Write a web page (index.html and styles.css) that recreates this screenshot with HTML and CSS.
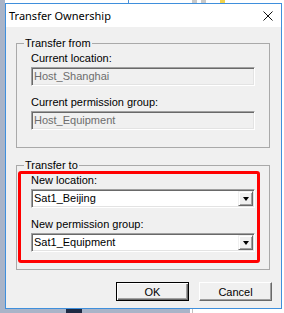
FILE: index.html
```html
<!DOCTYPE html>
<html lang="en">
<head>
  <meta charset="UTF-8">
  <title>Transfer Ownership</title>
  <link rel="stylesheet" href="styles.css">
</head>
<body>
  <div class="screen">
    <div class="desk-left"></div>
    <div class="desk-main">
      <div class="desk-top">
        <span class="desk-line"></span>
        <span class="desk-icon grey"></span>
        <span class="desk-icon grey"></span>
        <span class="desk-icon yellow"></span>
      </div>

      <div class="dialog">
        <div class="titlebar">
          <span class="title">Transfer Ownership</span>
          <svg class="close" width="10" height="10" viewBox="0 0 10 10">
            <path d="M0.5 0.5 L9.5 9.5 M9.5 0.5 L0.5 9.5" stroke="#111" stroke-width="1" fill="none"/>
          </svg>
        </div>

        <div class="client">
          <fieldset class="group">
            <legend>Transfer from</legend>
            <div class="group-body">
              <div class="label">Current location:</div>
              <div class="textbox disabled">Host_Shanghai</div>
              <div class="label gap">Current permission group:</div>
              <div class="textbox disabled">Host_Equipment</div>
            </div>
          </fieldset>

          <fieldset class="group second">
            <legend>Transfer to</legend>
            <div class="group-body">
              <div class="highlight"></div>
              <div class="label">New location:</div>
              <div class="textbox combo">
                <span>Sat1_Beijing</span>
                <span class="drop"><span class="arrow"></span></span>
              </div>
              <div class="label gap">New permission group:</div>
              <div class="textbox combo">
                <span>Sat1_Equipment</span>
                <span class="drop"><span class="arrow"></span></span>
              </div>
            </div>
          </fieldset>

          <div class="buttons">
            <div class="btn default">OK</div>
            <div class="btn">Cancel</div>
          </div>
        </div>
      </div>

      <div class="desk-bottom"><span class="task-block"></span></div>
    </div>
  </div>
</body>
</html>
```

FILE: styles.css
```css
body {
  margin: 0;
  background: #ffffff;
  font-family: 'Liberation Sans', Arial, sans-serif;
  font-size: 11px;
  color: #000;
}

.screen {
  display: flex;
  height: 313px;
  overflow: hidden;
}

.desk-left {
  width: 5px;
  background: #a9b4c8;
}

.desk-main {
  width: 279px;
}

/* strip of the window behind, above the dialog */
.desk-top {
  height: 3px;
  display: flex;
  align-items: stretch;
}

.desk-line {
  width: 1px;
  margin-left: 123px;
  background: #4a8fd8;
}

.desk-icon {
  width: 5px;
  margin-left: 4px;
}

.desk-icon:nth-child(2) {
  margin-left: 63px;
}

.desk-icon.grey {
  background: #c8c8c8;
}

.desk-icon.yellow {
  background: #f2d34a;
  margin-left: 14px;
}

.dialog {
  width: 277px;
  height: 306px;
  box-sizing: border-box;
  border: 1px solid #3f8fdc;
  display: flex;
  flex-direction: column;
}

.titlebar {
  height: 23px;
  background: #ffffff;
  display: flex;
  align-items: center;
  justify-content: space-between;
  padding: 0 8px 0 3px;
}

.title {
  font-family: 'Noto Sans', 'Open Sans', sans-serif;
  font-size: 11px;
  color: #000;
}

.close {
  display: block;
  margin-top: 1px;
}

.client {
  flex: 1;
  background: #f0f0f0;
  padding: 10px 9px 0 10px;
}

.group {
  margin: 0;
  padding: 0;
  width: 254px;
  box-sizing: border-box;
  border: 1px solid #a9a9a9;
  min-width: 0;
}

.group.second {
  margin-top: 11px;
}

.group legend {
  margin-left: 7px;
  padding: 0 1px;
  line-height: 13px;
}

.group-body {
  position: relative;
  padding: 2px 14px 17px 14px;
}

.label {
  line-height: 13px;
  margin-bottom: 2px;
}

.label.gap {
  margin-top: 10px;
}

.textbox {
  height: 19px;
  box-sizing: border-box;
  border-top: 1px solid #a0a0a0;
  border-left: 1px solid #a0a0a0;
  border-right: 1px solid #ffffff;
  border-bottom: 1px solid #ffffff;
  box-shadow: inset 1px 1px #696969, inset -1px -1px #e3e3e3;
  padding: 0 2px 0 2px;
  display: flex;
  align-items: center;
  line-height: 13px;
}

.textbox.disabled {
  background: #f0f0f0;
  color: #6d6d6d;
}

.textbox.combo {
  background: #ffffff;
  justify-content: space-between;
  padding-right: 1px;
}

.drop {
  width: 15px;
  height: 15px;
  box-sizing: border-box;
  background: #f0f0f0;
  border-top: 1px solid #f0f0f0;
  border-left: 1px solid #f0f0f0;
  border-right: 1px solid #696969;
  border-bottom: 1px solid #696969;
  box-shadow: inset 1px 1px #ffffff, inset -1px -1px #a0a0a0;
  display: flex;
  align-items: center;
  justify-content: center;
}

.arrow {
  width: 0;
  height: 0;
  border-left: 3.5px solid transparent;
  border-right: 3.5px solid transparent;
  border-top: 4px solid #000;
}

/* red annotation frame drawn over the second group */
.highlight {
  position: absolute;
  left: 1px;
  top: -1px;
  width: 242px;
  height: 92px;
  box-sizing: border-box;
  border: 3px solid #ff0000;
  border-radius: 3px;
}

.buttons {
  display: flex;
  justify-content: flex-end;
  gap: 10px;
  margin-top: 12px;
}

.btn {
  width: 73px;
  height: 19px;
  box-sizing: border-box;
  background: #f0f0f0;
  border-top: 1px solid #ffffff;
  border-left: 1px solid #ffffff;
  border-right: 1px solid #696969;
  border-bottom: 1px solid #696969;
  box-shadow: inset -1px -1px #a0a0a0;
  display: flex;
  align-items: center;
  justify-content: center;
}

.btn.default {
  border: 1px solid #000;
  box-shadow: inset 1px 1px #ffffff, inset -1px -1px #696969, inset -2px -2px #a0a0a0;
}

.desk-bottom {
  height: 4px;
  background: linear-gradient(to right, #a9b4c8 185px, #ffffff 185px, #ffffff 187px, #c0c0c0 187px, #c0c0c0 188px, #ffffff 188px);
}

.task-block {
  display: block;
  width: 16px;
  height: 4px;
  margin-left: 61px;
  background: #1e2a44;
}
```
